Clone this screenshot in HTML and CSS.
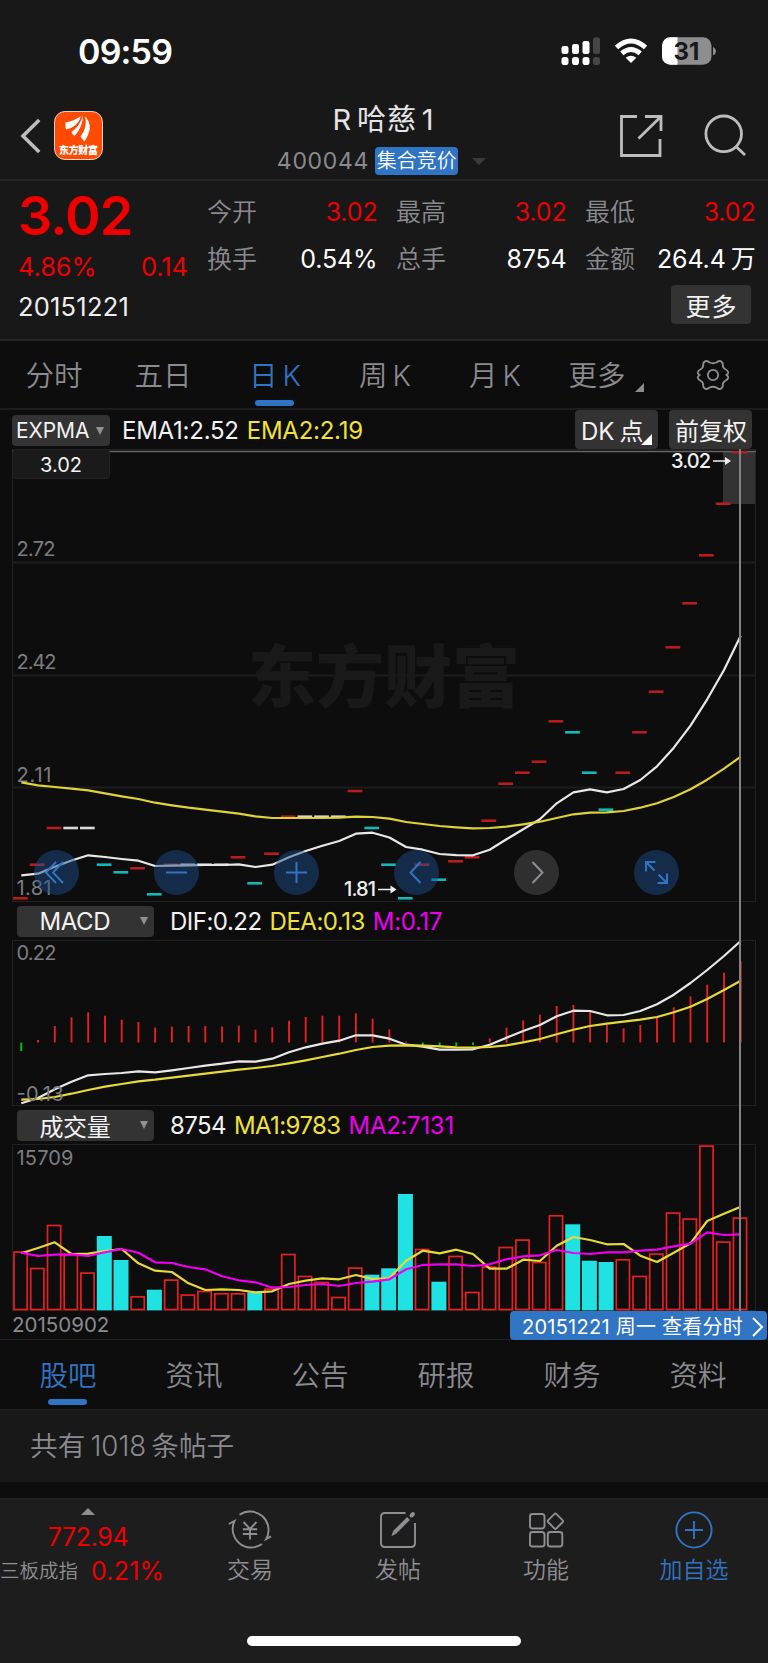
FILE: index.html
```html
<!DOCTYPE html>
<html lang="zh-CN">
<head>
<meta charset="utf-8">
<title>R哈慈1 400044</title>
<link rel="stylesheet" href="styles.css">
</head>
<body>
<div class="screen">
  <header class="top">
    <div class="status">
      <span class="clock">09:59</span>
      <svg class="status-icons" width="160" height="32" viewBox="558 35 160 32">
        <g fill="#fff">
          <rect x="561.5" y="46" width="7" height="8" rx="2.2"/><rect x="572" y="44" width="7" height="10" rx="2.2"/><rect x="582.5" y="41" width="7" height="13" rx="2.2"/>
          <rect x="561.5" y="57" width="7" height="8" rx="2.8"/><rect x="572" y="57" width="7" height="8" rx="2.8"/><rect x="582.5" y="57" width="7" height="8" rx="2.8"/>
        </g>
        <g fill="#464646"><rect x="593" y="37.500" width="7" height="16.500" rx="2.2"/><rect x="593" y="57" width="7" height="8" rx="2.8"/></g>
        <g fill="none" stroke="#fff" stroke-width="5">
          <path d="M616.500 47.500Q631 34.500 645.500 47.500"/><path d="M621.800 53.400Q631 45.600 640.200 53.400"/>
        </g>
        <path d="M625.700 57.800Q631 53.600 636.300 57.800L631 63z" fill="#fff"/>
        <rect x="662" y="37.300" width="49.500" height="27.500" rx="8.500" fill="#8e8e8e"/>
        <path d="M677.500 37.300h-7a8.500 8.500 0 0 0-8.500 8.500v10.500a8.500 8.500 0 0 0 8.500 8.500h7z" fill="#fff"/>
        <path d="M713 47q3 1.500 3 4.200t-3 4.200z" fill="#8e8e8e"/>
        <text x="686.500" y="60" text-anchor="middle" class="battery">31</text>
      </svg>
    </div>
    <div class="title-row">
      <svg class="nav-left" width="110" height="60" viewBox="0 106 110 60">
        <path d="M39.200 120L23 136l16.200 16" fill="none" stroke="#bdbdbd" stroke-width="3.600"/>
        <rect x="54.500" y="111.500" width="48" height="48" rx="10.500" fill="#fe4a02" stroke="#e6d3cc"/>
        <g fill="#fff">
          <path d="M65.500 122.500Q74 121 81 116Q78 127 66 129.500Q65 126 65.500 122.500z"/>
          <path d="M83 115.500Q83 127 74.500 136Q72 134.500 71.500 132Q80 126 83 115.500z"/>
          <path d="M85 116Q93 125 88 135Q86.500 138.500 84.500 141.500Q82 139 80.500 136.500Q88 127 85 116z"/>
        </g>
        <text x="59" y="153.700" class="logo-text" textLength="39">东方财富</text>
      </svg>
      <div class="title">
        <h1><span class="r">R</span>哈慈<span class="l">1</span></h1>
        <div class="code"><span>400044</span><b>集合竞价</b><i class="caret"></i></div>
      </div>
      <svg class="nav-right" width="140" height="60" viewBox="615 106 140 60">
        <g fill="none" stroke="#bdbdbd" stroke-width="2.800">
          <path d="M637 116.500h-15.500v39H660V139M645 116.500h16V131M660.500 117L638.500 138.500"/>
          <circle cx="723.700" cy="133.800" r="17.800"/><path d="M735.500 146L745 155"/>
        </g>
      </svg>
    </div>
  </header>

  <section class="quote">
    <div class="price">
      <strong>3.02</strong>
      <div class="change"><span>4.86%</span><span>0.14</span></div>
      <div class="date">20151221</div>
    </div>
    <div class="facts">
      <dl>
        <div><dt>今开</dt><dd class="up">3.02</dd></div>
        <div><dt>最高</dt><dd class="up">3.02</dd></div>
        <div><dt>最低</dt><dd class="up">3.02</dd></div>
        <div><dt>换手</dt><dd>0.54%</dd></div>
        <div><dt>总手</dt><dd>8754</dd></div>
        <div><dt>金额</dt><dd>264.4<span class="l">万</span></dd></div>
      </dl>
      <button class="more">更多</button>
    </div>
  </section>

  <nav class="periods">
    <a>分时</a><a>五日</a><a class="on">日<span class="l">K</span></a><a>周<span class="l">K</span></a><a>月<span class="l">K</span></a>
    <a class="more-tab">更多<i class="corner"></i></a>
    <svg class="gear" width="34" height="34" viewBox="-17 -17 34 34" fill="none" stroke="#8e8e93" stroke-width="1.800">
      <path d="M-3.500 -12.500Q0 -11 3.500 -12.500Q5.500 -14.500 7.500 -13.800Q9.800 -13 9.800 -10.500Q9.500 -7.500 12 -6Q15 -4.500 15.300 -2.500Q15.500 -1.500 13.500 0Q15.500 1.500 15.300 2.500Q15 4.500 12 6Q9.500 7.500 9.800 10.500Q9.800 13 7.500 13.800Q5.500 14.500 3.500 12.500Q0 11 -3.500 12.500Q-5.500 14.500 -7.500 13.800Q-9.800 13 -9.800 10.500Q-9.500 7.500 -12 6Q-15 4.500 -15.300 2.500Q-15.500 1.500 -13.500 0Q-15.500 -1.500 -15.300 -2.500Q-15 -4.500 -12 -6Q-9.500 -7.500 -9.800 -10.500Q-9.800 -13 -7.500 -13.800Q-5.500 -14.500 -3.500 -12.500z"/>
      <circle r="5.200"/>
    </svg>
  </nav>

  <main class="charts">
    <div class="bar main-bar">
      <button class="pick small">EXPMA<i class="tri"></i></button>
      <div class="legend"><span>EMA1:2.52</span><span class="y">EMA2:2.19</span></div>
      <div class="opts"><button>DK<span class="l">点</span><i class="corner"></i></button><button>前复权</button></div>
    </div>
    <svg id="kline" width="768" height="453" viewBox="0 449 768 453"></svg>
    <div class="bar">
      <button class="pick"><span>MACD</span><i class="tri"></i></button>
      <div class="legend"><span>DIF:0.22</span><span class="y">DEA:0.13</span><span class="m">M:0.17</span></div>
    </div>
    <svg id="macd" width="768" height="166" viewBox="0 940 768 166"></svg>
    <div class="bar">
      <button class="pick"><span>成交量</span><i class="tri"></i></button>
      <div class="legend vol"><span>8754</span><span class="y">MA1:9783</span><span class="m">MA2:7131</span></div>
    </div>
    <svg id="volume" width="768" height="167" viewBox="0 1144 768 167"></svg>
    <div class="dates"><span>20150902</span>
      <a class="detail">20151221 周一 查看分时<svg width="14" height="22" viewBox="0 0 14 22"><path d="M2 2l9 9-9 9" fill="none" stroke="#fff" stroke-width="2"/></svg></a>
    </div>
    <div class="crosshair"></div>
    <div class="value-tag">3.02</div>
  </main>

  <nav class="sections">
    <a class="on">股吧</a><a>资讯</a><a>公告</a><a>研报</a><a>财务</a><a>资料</a>
  </nav>
  <section class="posts">共有<span class="mid">1018</span>条帖子</section>

  <footer class="dock">
    <div class="index">
      <i class="up-caret"></i>
      <span class="idx">772.94</span>
      <div><small>三板成指</small><span>0.21%</span></div>
    </div>
    <a><svg width="46" height="40" viewBox="-23 -20 46 40" fill="none" stroke="#8e8e93" stroke-width="1.900">
      <path d="M-10.500 -15.200A18.500 18.500 0 0 1 16.200 9L21 6.300M-21.200 -6L-15.500 -9A18.500 18.500 0 0 0 12 14"/>
      <path d="M-6.500 -8L0 -1L6.500 -8M0 -1V9.500M-7.200 -.7H7.200M-7.200 4H7.200"/></svg>交易</a>
    <a><svg width="46" height="40" viewBox="-23 -20 46 40" fill="none" stroke="#8e8e93" stroke-width="1.900">
      <path d="M7.500 -17H-13Q-17 -17 -17 -13V13Q-17 17 -13 17H13Q17 17 17 13V-7"/>
      <path d="M10.500 -11.500L-3.500 2.500" stroke-width="4"/><path d="M-4.900 1.100L-6.500 6L-2.100 3.900z" fill="#8e8e93" stroke="none"/><path d="M13.500 -14.500L15 -16" stroke-width="4" stroke-linecap="round"/></svg>发帖</a>
    <a><svg width="46" height="40" viewBox="-23 -20 46 40" fill="none" stroke="#8e8e93" stroke-width="1.900">
      <rect x="-16" y="-16" width="14.500" height="14.500" rx="2.500"/><rect x="-16" y="2" width="14.500" height="14.500" rx="2.500"/><rect x="1.800" y="2" width="14.500" height="14.500" rx="2.500"/>
      <rect x="3.600" y="-14.600" width="11.600" height="11.600" rx="1.500" transform="rotate(45 9.400 -8.800)"/></svg>功能</a>
    <a class="add"><svg width="46" height="40" viewBox="-23 -20 46 40" fill="none" stroke="#3074c4" stroke-width="1.900">
      <circle r="17.600"/><path d="M-9 0H9M0 -9V9"/></svg>加自选</a>
    <div class="home"></div>
  </footer>
</div>
<script src="charts.js"></script>
</body>
</html>
```
FILE: styles.css
```css
* { box-sizing: border-box; }
body { margin: 0; background: #0d0d0d; font-family: Inter, "Noto Sans CJK SC", sans-serif; color: #f2f2f2; font-weight: 375; }
button { font: inherit; color: inherit; border: 0; padding: 0; background: #333; border-radius: 4px; }
svg { display: block; }
i { font-style: normal; }
.screen { width: 768px; height: 1663px; overflow: hidden; display: flex; flex-direction: column; }
.screen > * { flex-shrink: 0; }
.l { margin-left: 5px; }
.r { margin-right: 5px; }

.top { height: 181px; background: #181818; border-bottom: 2px solid #242424; }
.status { height: 100px; padding: 35px 50px 0 78px; display: flex; justify-content: space-between; }
.clock { font-size: 34px; line-height: 34px; font-weight: 600; letter-spacing: -.8px; color: #fff; }
.battery { font: 700 24px Inter, sans-serif; fill: #181818; }
.logo-text { font: 900 10px "Noto Sans CJK SC", sans-serif; fill: #fff; }
.title-row { display: grid; grid-template-columns: 110px 1fr 140px 13px; padding-top: 2px; }
.nav-left, .nav-right { margin-top: 4px; }
.title { padding: 1px 0 0 42px; display: flex; flex-direction: column; align-items: center; }
h1 { margin: 0; font-size: 29px; line-height: 34px; font-weight: 375; color: #e4e4e4; letter-spacing: .9px; }
.code { display: flex; align-items: center; margin-top: 10px; height: 28px; color: #8a8a90; font-size: 23px; letter-spacing: .7px; margin-left: -4px; }
.code b { font-size: 20px; line-height: 29px; height: 28px; font-weight: 350; letter-spacing: 0; color: #fff; background: #3074c4; border-radius: 4px; width: 83px; text-align: center; margin-left: 6px; }
.caret { border: 7px solid transparent; border-top-color: #3a3a3a; border-bottom: 0; margin-left: 14px; }

.quote { height: 160px; background: #181818; border-bottom: 2px solid #242424; display: grid; grid-template-columns: 207px 1fr; font-size: 25px; }
.price { padding-left: 18px; color: #ee0000; font-size: 25.500px; }
.price strong { display: block; font-size: 54px; line-height: 60px; font-weight: 600; padding-top: 5px; letter-spacing: -.9px; }
.change { display: flex; justify-content: space-between; width: 170px; line-height: 30px; padding-top: 6px; letter-spacing: -.1px; }
.date { color: #ededed; line-height: 30px; margin-top: 10px; letter-spacing: .2px; }
.facts { display: flex; flex-direction: column; align-items: flex-end; padding-right: 13px; }
dl { margin: 8px 0 0; width: 548px; display: grid; grid-template-columns: repeat(3, 170.500px); column-gap: 18.500px; }
dl > div { display: flex; justify-content: space-between; height: 47px; line-height: 47px; }
dt { color: #8a8a90; font-weight: 350; }
dd { margin: 0; color: #fff; letter-spacing: -.15px; }
.up { color: #ee0000; }
.more { width: 80px; height: 39px; margin: 2px 4px 0 0; letter-spacing: 1px; text-indent: 1px; }

.periods { height: 69px; border-bottom: 2px solid #1d1d1d; display: grid; grid-template-columns: 108px 110px 114px 106px 114px 90px 1fr; align-items: stretch; color: #8a8a90; font-size: 28.500px; font-weight: 350; }
.periods a { text-align: center; line-height: 69px; position: relative; }
.periods .on, .sections .on { color: #3074c4; }
.on::after { content: ""; position: absolute; left: 50%; bottom: 4px; width: 39px; height: 6px; margin-left: -20px; border-radius: 3px; background: #3074c4; }
.corner { position: absolute; right: 6px; bottom: 4px; border-left: 9px solid transparent; border-bottom: 9px solid #8a8a90; }
.more-tab .corner { right: -2px; bottom: 18px; }
.gear { margin: 17px 0 0 54px; }

.charts { position: relative; }
.bar { height: 38px; display: flex; align-items: center; padding-left: 17px; }
.main-bar { height: 39px; padding: 0 16px 0 12px; }
.pick { width: 137px; height: 31px; display: flex; align-items: center; justify-content: space-between; padding: 0 6px 0 22.500px; font-size: 24px; letter-spacing: -.4px; }
.pick.small { width: 98px; font-size: 21px; padding: 0 6px 0 4px; letter-spacing: -.1px; margin-top: 2px; }
.tri { border: 4.500px solid transparent; border-top: 8px solid #909096; border-bottom: 0; }
.legend { display: flex; gap: 8px; margin-left: 16px; padding-top: 1px; font-size: 24px; letter-spacing: -.5px; }
.legend.vol { letter-spacing: -.6px; }
.main-bar .legend { margin-left: 12px; letter-spacing: -.25px; padding-top: 1px; }
.y { color: #f0e13c; }
.m { color: #ee00ee; }
.legend .m { letter-spacing: -.3px; }
.opts { display: flex; gap: 11px; margin-left: auto; font-size: 24px; letter-spacing: -.5px; }
.opts button { width: 83px; height: 39px; position: relative; text-align: left; padding-left: 6px; white-space: nowrap; }
.opts .corner { border-bottom-color: #fff; border-left-width: 11px; border-bottom-width: 11px; }
.dates { height: 29px; border-bottom: 1px solid #242424; padding-left: 12px; display: flex; justify-content: space-between; font-size: 20.500px; line-height: 28px; color: #8a8a90; }
.detail { width: 257px; height: 29px; background: #3074c4; color: #fff; border-radius: 4px; display: flex; align-items: center; justify-content: space-between; padding: 2px 2px 0 12px; margin-right: 1px; font-size: 20px; letter-spacing: .25px; }
.crosshair { position: absolute; left: 739px; top: 39px; width: 2px; height: 862px; background: #828287; }
.value-tag { position: absolute; left: 12px; top: 39px; width: 98px; height: 30px; border: 1px solid #242424; border-radius: 4px; background: #1a1a1a; font-size: 20px; line-height: 30px; text-align: center; }
.axis { font: 375 20px Inter, sans-serif; fill: #7d7d82; }
.mark { font: 450 20px Inter, sans-serif; fill: #f0f0f0; }
.watermark { font: 900 68px "Noto Sans CJK SC", sans-serif; fill: #191919; }

.sections { height: 69px; padding: 0 7px 0 5px; display: flex; font-size: 28.500px; font-weight: 350; color: #8a8a90; }
.sections a { flex: 1; text-align: center; line-height: 71px; position: relative; }
.posts { height: 73px; background: #181818; border-top: 1px solid #222; padding-left: 30px; font-size: 27.700px; line-height: 73px; font-weight: 350; color: #8a8a90; }
.mid { margin: 0 5px; }
.dock { height: 165px; margin-top: 16px; background: #1d1d1d; border-top: 2px solid #222; display: grid; grid-template-columns: 176px repeat(4, 148px); position: relative; color: #8e8e93; font-size: 23px; font-weight: 350; }
.dock > a { display: flex; flex-direction: column; align-items: center; padding-top: 10px; line-height: 40px; }
.dock .add { color: #3074c4; }
.index { display: flex; flex-direction: column; align-items: center; color: #ee0000; font-size: 25px; font-weight: 375; }
.up-caret { border: 7px solid transparent; border-bottom-color: #8e8e93; border-top: 0; margin: 8px 0 7px; }
.idx { line-height: 30px; letter-spacing: -.4px; }
.index div { width: 176px; display: flex; align-items: center; gap: 13px; line-height: 39px; letter-spacing: .2px; }
.index small { font-size: 19.500px; font-weight: 350; color: #8e8e93; letter-spacing: 0; }
.home { position: absolute; left: 247px; bottom: 17px; width: 274px; height: 10px; border-radius: 5px; background: #fff; }
```
FILE: charts.js
```js
const xAt = i => 21.3 + 16.73 * i;
const RED = '#b81c1c', BRIGHT = '#e62020', CYAN = '#14b8b8', BLUE = '#3074c4';

const line = (ys, color) =>
  `<polyline points="${ys.map((y, i) => xAt(i).toFixed(1) + ',' + y).join(' ')}" fill="none" stroke="${color}" stroke-width="2.2" stroke-linejoin="round"/>`;
const frame = (y, h) => `<rect x="12.5" y="${y}" width="743" height="${h}" fill="none" stroke="#212121"/>`;
const label = (x, y, t, w, cls = 'axis') => `<text x="${x}" y="${y}" class="${cls}" textLength="${w}">${t}</text>`;

// closing price of each day: vertical position and colour
const closes = `898.3r 864.7r 828r 828w 828w 864.7c 872.3c 868.3r 894.3c 864.7r 864.7w 864.7w 864.7w 857.3r 883.3c 853.7r
816.7r 816.7w 816.7w 816.7w 791r 828c 864.7c 898.3c 864.7r 879.7c 861.3r 857.3r 820.7r 783.7r 772.7r 761.7r
721.3r 732.3c 772.7c 809.7c 772.7r 732.3r 691.7r 647.3r 603.3r 555.3r 503.7r 452.3r`.split(/\s+/);
const ema1 = [875.3,873.7,866.7,860.5,855.3,857,859,860.7,866,865.7,865.3,865,865,864.3,867,864.7,857.3,851,845.7,841,833.7,832.7,837.5,847,849.7,854,855.2,855.3,849.7,839.3,829.3,819.3,803.3,792.3,789.3,792.3,789,780,766.3,747.7,725.7,699.3,670,635.7];
const ema2 = [782.3,785.3,787,788.7,790.3,793.3,796.3,799,802.7,805.3,807.7,809.7,811.7,813.7,816.3,818,818,818,818,817.7,816.7,817,818.7,822,824,826,827.3,828.3,828,826.7,824.3,821.7,818,814.3,812.7,812.3,811,807.7,803.3,797,789.3,779.7,768.7,756.7];

let k = frame(449.5, 452);
for (const y of [562.5, 675.5, 787.5]) k += `<path d="M13 ${y}H755" stroke="#1d1d1d" stroke-width="2"/>`;
k += label(248, 702, '东方财富', 272, 'watermark');
k += '<rect x="723" y="451" width="32" height="53" fill="#333"/>';
k += '<path d="M12 451.500H756" stroke="#66666a" stroke-width="1.300"/>';
k += label(16.5, 555.5, '2.72', 39) + label(16.5, 669, '2.42', 40) + label(16.5, 782, '2.11', 35) + label(16.5, 895, '1.81', 35);
closes.forEach((c, i) => {
  const color = { r: RED, w: '#d8d8d8', c: CYAN }[c.slice(-1)];
  k += `<rect x="${(xAt(i) - 8.2).toFixed(1)}" y="${parseFloat(c) - 1.3}" width="14.7" height="2.6" fill="${color}"/>`;
});
k += line(ema1, '#e8e8e8') + line(ema2, '#e0d238');
k += label(671, 468, '3.02', 40, 'mark') + '<path d="M713 461H726" stroke="#f0f0f0" stroke-width="1.500"/><path d="M725 457l6 4-6 4z" fill="#f0f0f0"/>';
k += label(344, 896, '1.81', 32, 'mark') + '<path d="M378 889.500H391" stroke="#f0f0f0" stroke-width="1.500"/><path d="M390.500 885.500l6 4-6 4z" fill="#f0f0f0"/>';
const glyphs = [
  'M-.5 -10.500L-10.500 0L-.5 10.500M6.500 -10.500L-3.500 0L6.500 10.500',
  'M-10.500 0H10.500',
  'M-10.500 0H10.500M0 -10.500V10.500',
  'M4 -10.500L-6 0L4 10.500',
  'M-4 -10.500L6 0L-4 10.500',
  'M-2 -2L-10.500 -10.500M-10.500 -1V-10.500H-1M2 2L10.500 10.500M10.500 1V10.500H1'
];
glyphs.forEach((d, n) => {
  const grey = n === 4;
  k += `<g transform="translate(${56.5 + n * 120} 872.5)"><circle r="22.5" fill="${grey ? '#555558' : '#1d4f8c'}" fill-opacity=".48"/><path d="${d}" fill="none" stroke="${grey ? '#8e8e93' : BLUE}" stroke-width="2"/></g>`;
});
document.getElementById('kline').innerHTML = k;

const hist = [1051,1040,1026,1017.3,1012.3,1015.7,1019.7,1022,1027.7,1026.7,1026,1026,1026.3,1025.7,1029.7,1027.3,1020.7,1017,1015.7,1015.7,1013.3,1018.7,1029.3,1041.3,1045,1046,1046,1045,1038.3,1027.7,1020.3,1014.7,1006,1005,1011.3,1025,1028.3,1025,1017.3,1007.3,996.3,984.7,972.7,961.3];
const dif = [1103.3,1098,1089.3,1081.7,1075.3,1074,1073,1071.3,1072.3,1070.3,1068,1065.7,1063.7,1061.3,1061.7,1058.7,1052.3,1047.3,1043.7,1040.7,1035.3,1035.3,1038.7,1044.7,1046.7,1049.7,1049.7,1049.3,1044.7,1037.7,1031,1025,1016.3,1010.7,1011,1015.3,1015,1011,1004.3,994.7,983,970,956,941];
const dea = [1099.7,1099,1097,1093.7,1090,1086.7,1084,1081.3,1079.7,1077.7,1075.7,1073.7,1071.7,1069.7,1068,1066,1063.3,1060.3,1057,1053.7,1050,1047,1045.7,1045.3,1045.7,1046.3,1047.3,1047.7,1047,1045.3,1042.3,1039,1034.3,1029.7,1026,1023.7,1021.7,1019.7,1017,1012.3,1006.7,999,990,980.7];
let m = frame(940.5, 165) + label(16.5, 960, '0.22', 40);
hist.forEach((y, i) => { m += `<path d="M${xAt(i).toFixed(1)} 1042.5V${y}" stroke="${y > 1042.5 ? '#00c800' : BRIGHT}" stroke-width="1.900"/>`; });
m += line(dif, '#e8e8e8') + line(dea, '#e8da38') + label(16.5, 1101, '-0.13', 47);
document.getElementById('macd').innerHTML = m;

const volumes = `1251.3r 1267.7r 1224.7r 1254r 1272.3r 1236c 1260c 1296r 1289.7c 1279.3r 1294.3r 1290.7r 1293r 1293r 1292.3c 1288.3r
1253.7r 1275.7r 1281.7r 1296.7r 1267.3r 1274.7c 1268.3c 1194c 1248.7r 1281.7c 1255.7r 1291.7r 1266.3r 1246.7r 1239.3r 1261.7r
1215r 1224.3c 1260.7c 1262c 1259r 1275.7r 1253.3r 1212.3r 1218.3r 1145.3r 1241.3r 1217.3r`.split(/\s+/);
const ma1 = [1253.3,1248,1242.3,1254,1253.7,1251,1249,1263.3,1270.7,1272,1283.3,1290,1289.3,1290,1292.3,1291.3,1284,1280.7,1278.3,1279.3,1275,1279,1278,1260.7,1250.7,1253.3,1249.7,1254,1268.7,1268.7,1259.7,1261,1245.7,1237,1240,1244.3,1244,1255.7,1262,1252.7,1243.3,1221,1213.7,1206.7];
const ma2 = [1252.7,1256,1254.7,1254.3,1256,1252.3,1249,1252.7,1262.3,1263,1267,1269.3,1276.3,1280.3,1282.3,1287.7,1287,1285,1284,1286,1283,1281.7,1279.3,1269.3,1265,1264.3,1264.3,1266,1264.3,1259.3,1256.3,1255.3,1250,1253,1254,1252.3,1252.3,1250.7,1249.7,1246.3,1243.7,1232.3,1235,1234.3];
let v = frame(1144.5, 166) + label(16.5, 1164.500, '15709', 57);
volumes.forEach((s, i) => {
  const top = parseFloat(s), x = xAt(i) - 8.2;
  v += s.endsWith('c')
    ? `<rect x="${x.toFixed(1)}" y="${top}" width="15" height="${(1310.3 - top).toFixed(1)}" fill="#20e2e2"/>`
    : `<rect x="${(x + .9).toFixed(1)}" y="${(top + .8).toFixed(1)}" width="13.200" height="${(1308.700 - top).toFixed(1)}" fill="none" stroke="${BRIGHT}" stroke-width="1.700"/>`;
});
v += line(ma1, '#e8da38') + line(ma2, '#ee00ee');
document.getElementById('volume').innerHTML = v;
```
